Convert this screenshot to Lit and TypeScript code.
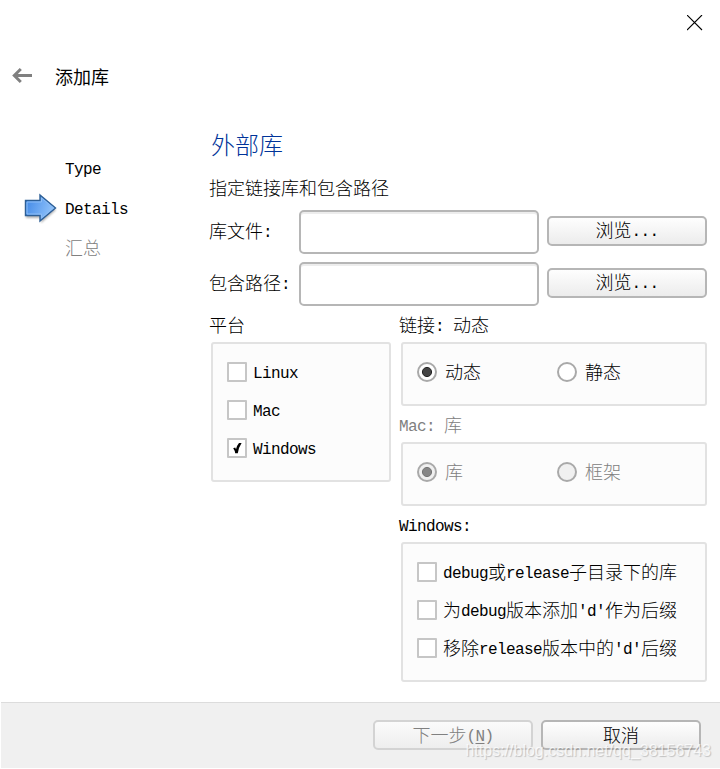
import { LitElement, html, css, svg, nothing } from "lit";
import { customElement, property } from "lit/decorators.js";

// Latin runs sit on a half-width grid: 9px per character beside 18px ideographs.
const mixed = (text: string) =>
  text
    .split(/([\x20-\x7e]+)/)
    .filter((part) => part)
    .map((part) => (/^[\x20-\x7e]/.test(part) ? html`<span class="latin">${part}</span>` : part));

const textStyles = css`
  .latin {
    font-family: "Liberation Mono", monospace;
    font-size: 16px;
    letter-spacing: -0.6px;
    font-weight: 400;
    white-space: pre;
    position: relative;
    top: -1px;
  }
`;

@customElement("choice-item")
class ChoiceItem extends LitElement {
  @property() label = "";
  @property() kind = "check";
  @property({ type: Boolean }) checked = false;
  @property({ type: Boolean }) disabled = false;

  static styles = [
    textStyles,
    css`
      :host { display: block; height: 20px; }
      .item { display: flex; align-items: center; height: 20px; line-height: 20px; white-space: nowrap; gap: 6px; }
      .item.radio { gap: 8px; }
      .mark { box-sizing: border-box; flex: none; width: 20px; height: 20px; background: #fff; border: 2px solid #c6c6c6; border-radius: 1px; }
      .radio .mark { border-color: #a9a9a9; border-radius: 50%; }
      .disabled { color: #808080; }
      .disabled .mark { background: #f0f0f0; }
      .mark svg { display: block; width: 16px; height: 16px; }
      .text { padding-top: 2px; }
      .radio .text { padding: 0 0 2px; }
    `,
  ];

  render() {
    const tick = svg`<path d="M4.2 8.3 L6.2 7.6 L7 9.2 Q8 5.2 10 3 L12.6 3 Q9.8 7 8.8 13.2 L6.2 13.2 Q5.8 10.5 4.2 8.3Z" fill="#000"/>`;
    const dot = svg`<circle cx="8" cy="8" r="4.6" fill=${this.disabled ? "#868686" : "#444"} stroke=${this.disabled ? "#747474" : "#222"} stroke-width="1"/>`;
    return html`<div class="item ${this.kind} ${this.disabled ? "disabled" : ""}">
      <span class="mark">${this.checked
        ? html`<svg viewBox="0 0 16 16">${this.kind === "radio" ? dot : tick}</svg>`
        : nothing}</span>
      <span class="text">${mixed(this.label)}</span>
    </div>`;
  }
}

@customElement("app-root")
class AppRoot extends LitElement {
  static styles = [
    textStyles,
    css`
      :host {
        display: block; position: relative; width: 720px; height: 769px; overflow: hidden;
        background: #fff; color: #000;
        font: 300 18px "Noto Sans CJK SC", sans-serif;
      }
      * { box-sizing: border-box; }
      .window { display: flex; flex-direction: column; height: 768px; }
      .titlebar { display: flex; justify-content: flex-end; height: 46px; padding: 15px 17px 0 0; }
      .titlebar svg { width: 16px; height: 16px; }
      .header { display: flex; align-items: center; height: 60px; padding-left: 12px; gap: 22px; font-weight: 400; }
      .header svg { width: 21px; height: 20px; }
      .header span { line-height: 20px; }
      .content { display: flex; flex: 1; padding-left: 24px; }
      .steps { width: 185px; padding-top: 42px; }
      .step { display: flex; align-items: center; height: 40px; line-height: 20px; }
      .step .slot { width: 41px; height: 32px; }
      .step .name { padding-top: 2px; }
      .step.pending { color: #808080; }
      .step.pending .name { padding: 0 0 2px; }
      .page { width: 498px; padding-top: 20px; line-height: 20px; }
      h1 { margin: 0 0 0 2px; font: 300 24px/36px "Noto Sans CJK SC", sans-serif; color: #003399; }
      .intro { margin-top: 15px; height: 20px; }
      .field { display: grid; grid-template-columns: 90px 240px 160px; align-items: center; height: 44px; margin-top: 8px; }
      .intro + .field { margin-top: 13px; }
      .input { height: 44px; border: 2px solid #b6b6b6; border-radius: 5px; background: #fff; box-shadow: inset 0 2px #ededed; }
      .field .button { margin: -2px 0 0 8px; }
      .button {
        display: flex; align-items: center; justify-content: center; width: 160px; height: 30px;
        border: 2px solid #b6b6b6; border-radius: 5px; background: linear-gradient(#fefefe, #ececec);
      }
      .button.disabled { color: #808080; border-color: #d3d3d3; background: linear-gradient(#fbfbfb, #eeeeee); }
      .groups { display: grid; grid-template-columns: 182px 308px; column-gap: 8px; margin-top: 8px; }
      .caption { height: 20px; margin-bottom: 8px; }
      .caption.muted { color: #808080; }
      .group { margin: 0 0 8px 2px; padding: 18px 14px; border: 2px solid #e2e2e2; border-radius: 3px; background: #fcfcfc; }
      .list { display: flex; flex-direction: column; gap: 18px; height: 140px; }
      .left .list { width: 180px; }
      .pair { display: grid; grid-template-columns: 140px 1fr; height: 64px; width: 306px; }
      .right .list { width: 306px; }
      .footer { display: flex; justify-content: flex-end; gap: 8px; height: 66px; margin-left: 1px; padding: 17px 19px 0 0; border-top: 1px solid #dcdcdc; background: #f0f0f0; }
      .footer .button { padding-bottom: 2px; }
      .accel { text-decoration: underline; text-underline-offset: 2px; }
      .watermark {
        position: absolute; right: 9px; bottom: 8px; font: 400 16px/20px "Liberation Sans", sans-serif;
        color: rgba(255, 255, 255, 0.75); text-shadow: 1px 1px 1px rgba(0, 0, 0, 0.2); white-space: nowrap;
      }
    `,
  ];

  private field(label: string) {
    return html`<div class="field">
      <span>${mixed(label)}</span>
      <div class="input"></div>
      <div class="button"><span>${mixed("浏览...")}</span></div>
    </div>`;
  }

  render() {
    return html`
      <div class="window">
        <div class="titlebar">
          <svg viewBox="0 0 16 16"><path d="M0 0 L15 15 M15 0 L0 15" stroke="#000" stroke-width="1.1"/></svg>
        </div>
        <div class="header">
          <svg viewBox="0 0 21 20"><path d="M2 9.5 H20 M8.8 3 L2.3 9.5 L8.8 16" fill="none" stroke="#808080" stroke-width="3"/></svg>
          <span>添加库</span>
        </div>
        <div class="content">
          <div class="steps">
            <div class="step"><span class="slot"></span><span class="name">${mixed("Type")}</span></div>
            <div class="step">
              <svg class="slot" viewBox="0 0 41 32">
                <defs>
                  <linearGradient id="blue" x1="0" y1="0" x2="1" y2=".3">
                    <stop offset="0" stop-color="#3d86e6"/><stop offset="1" stop-color="#90c2fa"/>
                  </linearGradient>
                  <filter id="soft" x="-20%" y="-20%" width="140%" height="150%"><feGaussianBlur stdDeviation="1"/></filter>
                </defs>
                <path d="M2 10 H17 V6 L32 18 L17 31 V26 H2Z" fill="#000" opacity=".3" filter="url(#soft)"/>
                <path d="M1.5 8.5 H16 V3 L31.5 16 L16 29 V23.5 H1.5Z" fill="url(#blue)" stroke="#2d5f96" stroke-width="1.4"/>
                <path d="M3 10 H17.5 V6 L29.4 16 L17.5 26 V22 H3Z" fill="none" stroke="#8dbdf5" stroke-width="1"/>
              </svg>
              <span class="name">${mixed("Details")}</span>
            </div>
            <div class="step pending"><span class="slot"></span><span class="name">汇总</span></div>
          </div>
          <div class="page">
            <h1>外部库</h1>
            <div class="intro">指定链接库和包含路径</div>
            ${this.field("库文件:")} ${this.field("包含路径:")}
            <div class="groups">
              <div class="left">
                <div class="caption">平台</div>
                <div class="group list">
                  <choice-item label="Linux"></choice-item>
                  <choice-item label="Mac"></choice-item>
                  <choice-item label="Windows" checked></choice-item>
                </div>
              </div>
              <div class="right">
                <div class="caption">${mixed("链接: 动态")}</div>
                <div class="group pair">
                  <choice-item kind="radio" label="动态" checked></choice-item>
                  <choice-item kind="radio" label="静态"></choice-item>
                </div>
                <div class="caption muted">${mixed("Mac: 库")}</div>
                <div class="group pair">
                  <choice-item kind="radio" label="库" checked disabled></choice-item>
                  <choice-item kind="radio" label="框架" disabled></choice-item>
                </div>
                <div class="caption">${mixed("Windows:")}</div>
                <div class="group list">
                  <choice-item label="debug或release子目录下的库"></choice-item>
                  <choice-item label="为debug版本添加'd'作为后缀"></choice-item>
                  <choice-item label="移除release版本中的'd'后缀"></choice-item>
                </div>
              </div>
            </div>
          </div>
        </div>
        <div class="footer">
          <div class="button disabled"><span>下一步<span class="latin">(<span class="accel">N</span>)</span></span></div>
          <div class="button"><span>取消</span></div>
        </div>
      </div>
      <div class="watermark">https://blog.csdn.net/qq_38156743</div>
    `;
  }
}
